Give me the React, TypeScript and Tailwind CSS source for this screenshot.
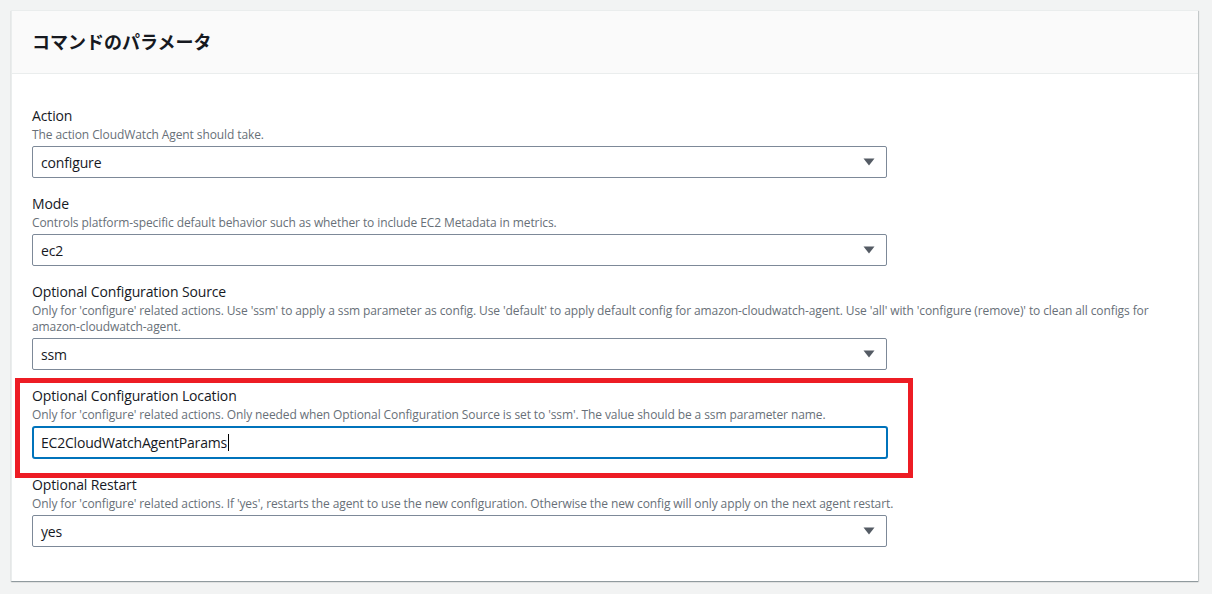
import React from "react";

// Systems Manager "run command" parameter panel (AWS console look).

type Field = {
  label: string;
  desc: string;
  value: string;
  kind: "select" | "input";
  highlight?: boolean;
};

const fields: Field[] = [
  {
    label: "Action",
    desc: "The action CloudWatch Agent should take.",
    value: "configure",
    kind: "select",
  },
  {
    label: "Mode",
    desc: "Controls platform-specific default behavior such as whether to include EC2 Metadata in metrics.",
    value: "ec2",
    kind: "select",
  },
  {
    label: "Optional Configuration Source",
    desc: "Only for 'configure' related actions. Use 'ssm' to apply a ssm parameter as config. Use 'default' to apply default config for amazon-cloudwatch-agent. Use 'all' with 'configure (remove)' to clean all configs for amazon-cloudwatch-agent.",
    value: "ssm",
    kind: "select",
  },
  {
    label: "Optional Configuration Location",
    desc: "Only for 'configure' related actions. Only needed when Optional Configuration Source is set to 'ssm'. The value should be a ssm parameter name.",
    value: "EC2CloudWatchAgentParams",
    kind: "input",
    highlight: true,
  },
  {
    label: "Optional Restart",
    desc: "Only for 'configure' related actions. If 'yes', restarts the agent to use the new configuration. Otherwise the new config will only apply on the next agent restart.",
    value: "yes",
    kind: "select",
  },
];

function Caret() {
  return (
    <svg width="12" height="8" viewBox="0 0 12 8" aria-hidden className="shrink-0">
      <path d="M0.5 0.5 H11.5 L6 7.5 Z" fill="#545b64" />
    </svg>
  );
}

function ParamField({ f }: { f: Field }) {
  return (
    <div className="relative">
      {f.highlight && (
        <div className="pointer-events-none absolute -left-[17px] -top-[7px] h-[100px] w-[898px] border-[5px] border-[#ed1c24]" />
      )}
      <div className="text-[14px] leading-[22px] tracking-[-0.13px] text-[#16191f]">{f.label}</div>
      <div className="mb-[3px] text-[12px] leading-[16px] tracking-[-0.1px] text-[#687078]">{f.desc}</div>
      {f.kind === "select" ? (
        <div className="flex h-[32px] w-[855px] items-center justify-between rounded-[2px] border border-[#7d8998] bg-white pl-[8px] pr-[11px] text-[14px] tracking-[-0.15px] text-[#16191f]">
          <span>{f.value}</span>
          <Caret />
        </div>
      ) : (
        <div className="flex h-[33px] w-[856px] items-center rounded-[3px] border-2 border-[#0073bb] bg-white pl-[7px] text-[14px] tracking-[-0.2px] text-[#16191f]">
          <span>{f.value}</span>
          <span className="ml-[1px] inline-block h-[17px] w-[1px] bg-black" />
        </div>
      )}
    </div>
  );
}

export default function App() {
  return (
    <div
      className="min-h-[594px] bg-[#f2f3f3] pl-[11px] pt-[10px]"
      style={{ fontFamily: '"Open Sans", "Noto Sans CJK JP", sans-serif' }}
    >
      <div className="w-[1187px] border-l border-t border-[#eaeded] bg-white shadow-[0_1px_1px_0_rgba(0,28,36,0.3),1px_1px_1px_0_rgba(0,28,36,0.15)]">
        <div className="flex h-[63px] items-center border-b border-[#eaeded] bg-[#fafafa] px-[20px]">
          <h2 className="text-[18px] font-bold leading-[22px] text-[#16191f]">
            コマンドのパラメータ
          </h2>
        </div>
        <div className="flex flex-col gap-[15px] px-[20px] pb-[34px] pt-[31px]">
          {fields.map((f) => (
            <ParamField key={f.label} f={f} />
          ))}
        </div>
      </div>
    </div>
  );
}
